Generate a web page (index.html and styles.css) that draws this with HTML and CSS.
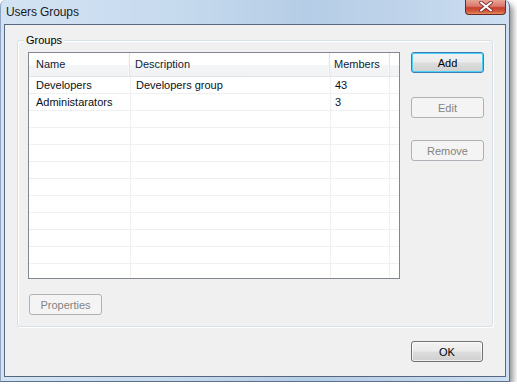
FILE: index.html
```html
<!DOCTYPE html>
<html>
<head>
<meta charset="utf-8">
<link rel="stylesheet" href="styles.css">
</head>
<body>
<div class="window">
  <div class="titlebar">
    <span class="title">Users Groups</span>
    <div class="close">
      <svg width="16" height="11" viewBox="0 0 16 11">
        <path d="M3 1.5 L13 9.5 M13 1.5 L3 9.5" stroke="#7a3030" stroke-width="3.6" stroke-linecap="round"/>
        <path d="M3 1.5 L13 9.5 M13 1.5 L3 9.5" stroke="#ffffff" stroke-width="2" stroke-linecap="round"/>
      </svg>
    </div>
  </div>
  <div class="client">
    <div class="group">
      <span class="legend">Groups</span>
      <div class="group-main">
        <div class="list">
          <div class="list-head">
            <div class="hcell c-name">Name</div>
            <div class="hcell c-desc">Description</div>
            <div class="hcell c-mem">Members</div>
            <div class="hcell c-fill"></div>
          </div>
          <div class="list-body">
            <div class="row"><div class="cell c-name">Developers</div><div class="cell c-desc">Developers group</div><div class="cell c-mem">43</div><div class="cell c-fill"></div></div>
            <div class="row"><div class="cell c-name">Administarators</div><div class="cell c-desc"></div><div class="cell c-mem">3</div><div class="cell c-fill"></div></div>
            <div class="row"><div class="cell c-name"></div><div class="cell c-desc"></div><div class="cell c-mem"></div><div class="cell c-fill"></div></div>
            <div class="row"><div class="cell c-name"></div><div class="cell c-desc"></div><div class="cell c-mem"></div><div class="cell c-fill"></div></div>
            <div class="row"><div class="cell c-name"></div><div class="cell c-desc"></div><div class="cell c-mem"></div><div class="cell c-fill"></div></div>
            <div class="row"><div class="cell c-name"></div><div class="cell c-desc"></div><div class="cell c-mem"></div><div class="cell c-fill"></div></div>
            <div class="row"><div class="cell c-name"></div><div class="cell c-desc"></div><div class="cell c-mem"></div><div class="cell c-fill"></div></div>
            <div class="row"><div class="cell c-name"></div><div class="cell c-desc"></div><div class="cell c-mem"></div><div class="cell c-fill"></div></div>
            <div class="row"><div class="cell c-name"></div><div class="cell c-desc"></div><div class="cell c-mem"></div><div class="cell c-fill"></div></div>
            <div class="row"><div class="cell c-name"></div><div class="cell c-desc"></div><div class="cell c-mem"></div><div class="cell c-fill"></div></div>
            <div class="row"><div class="cell c-name"></div><div class="cell c-desc"></div><div class="cell c-mem"></div><div class="cell c-fill"></div></div>
            <div class="row last"><div class="cell c-name"></div><div class="cell c-desc"></div><div class="cell c-mem"></div><div class="cell c-fill"></div></div>
          </div>
        </div>
        <div class="side-buttons">
          <button class="btn default btn-add">Add</button>
          <button class="btn btn-edit" disabled>Edit</button>
          <button class="btn btn-remove" disabled>Remove</button>
        </div>
      </div>
      <button class="btn btn-props" disabled>Properties</button>
    </div>
    <div class="footer">
      <button class="btn btn-ok">OK</button>
    </div>
  </div>
</div>
</body>
</html>
```

FILE: styles.css
```css
html, body {
  margin: 0;
  padding: 0;
  background: #ffffff;
}
body {
  font-family: "Liberation Sans", Arial, sans-serif;
  font-size: 11px;
  color: #000;
}
.window {
  width: 510px;
  height: 382px;
  box-sizing: border-box;
  padding: 0 3px 4px 3px;
  display: flex;
  flex-direction: column;
  background: linear-gradient(90deg, #d3e3f3 0%, #c6daee 35%, #b5cde6 60%, #c2d6ec 85%, #cddff1 100%);
  border-right: 1px solid #5b6f8a;
  border-bottom: 1px solid #5b6f8a;
  border-left: 1px solid #8ea4bf;
  border-radius: 6px 6px 0 0;
  box-shadow: 3px 4px 6px rgba(0,0,0,0.45);
  overflow: hidden;
}
.titlebar {
  height: 24px;
  display: flex;
  align-items: flex-start;
  flex-shrink: 0;
}
.title {
  font-size: 12px;
  color: #1a1a1a;
  padding: 5px 0 0 2px;
  line-height: 14px;
  letter-spacing: -0.1px;
}
.close {
  margin-left: auto;
  margin-right: 0;
  width: 41px;
  height: 15px;
  box-sizing: border-box;
  border: 1px solid #6e2b24;
  border-top: none;
  border-radius: 0 0 4px 4px;
  background: linear-gradient(180deg, #e9a595 0%, #d9776a 45%, #c8412e 55%, #d0583c 80%, #e38a5e 100%);
  display: flex;
  align-items: center;
  justify-content: center;
}
.close svg { display: block; margin-top: -1px; }
.client {
  flex: 1;
  background: #f0f0f0;
  border: 1px solid #56677e;
  padding: 15px 13px 0 12px;
  display: flex;
  flex-direction: column;
}
.group {
  position: relative;
  width: 476px;
  height: 287px;
  box-sizing: border-box;
  border: 1px solid #d5dfe5;
  border-radius: 3px;
  box-shadow: inset 1px 1px 0 #ffffff, 1px 1px 0 #ffffff;
  padding: 11px 0 0 10px;
  display: flex;
  flex-direction: column;
}
.legend {
  position: absolute;
  left: 6px;
  top: -8px;
  padding: 0 2px;
  background: #f0f0f0;
  line-height: 14px;
  font-size: 11px;
  color: #000;
}
.group-main {
  display: flex;
  align-items: flex-start;
}
.list {
  width: 372px;
  height: 227px;
  box-sizing: border-box;
  border: 1px solid #828790;
  background: #fff;
  overflow: hidden;
}
.list-head {
  display: flex;
  height: 23px;
  border-bottom: 1px solid #e5e5e5;
  background: linear-gradient(180deg, #ffffff 0%, #ffffff 50%, #f4f5f7 51%, #f1f2f4 100%);
}
.hcell {
  box-sizing: border-box;
  line-height: 22px;
  border-right: 1px solid #e3e5e8;
  box-shadow: inset -1px 0 0 #f9f9fa;
  color: #0e1c36;
  white-space: nowrap;
  overflow: hidden;
}
.c-name { width: 101px; padding-left: 7px; }
.c-desc { width: 200px; padding-left: 5px; }
.c-mem { width: 60px; padding-left: 4px; }
.c-fill { flex: 1; }
.list-head .c-fill { border-right: none; box-shadow: none; }
.row {
  display: flex;
  height: 17px;
  box-sizing: border-box;
  border-bottom: 1px solid #f0f0f0;
}
.cell {
  box-sizing: border-box;
  height: 16px;
  line-height: 17px;
  border-right: 1px solid #f0f0f0;
  color: #0a1020;
  white-space: nowrap;
  overflow: hidden;
}
.row .c-name { width: 102px; }
.row .c-desc { width: 200px; }
.row .c-mem { width: 59px; }
.row .c-fill { border-right: none; }
.side-buttons {
  display: flex;
  flex-direction: column;
  margin-left: 11px;
}
.btn {
  font-family: "Liberation Sans", Arial, sans-serif;
  font-size: 11px;
  width: 73px;
  height: 21px;
  box-sizing: border-box;
  padding: 0;
  margin: 0;
  border: 1px solid #707070;
  border-radius: 3px;
  color: #000;
  background: linear-gradient(180deg, #f2f2f2 0%, #ebebeb 48%, #dddddd 52%, #cfcfcf 100%);
  box-shadow: inset 0 0 0 1px rgba(255,255,255,0.7);
}
.btn:disabled {
  color: #838383;
  border-color: #adb2b5;
  background: #f4f4f4;
  box-shadow: none;
}
.btn.default {
  border-color: #3c7fb1;
  box-shadow: inset 0 0 0 1px #48d0f7;
}
.btn-edit { margin-top: 24px; }
.btn-remove { margin-top: 22px; }
.btn-props {
  margin-top: 15px;
  margin-left: 1px;
}
.footer {
  display: flex;
  justify-content: flex-end;
  padding: 14px 9px 0 0;
}
.btn-ok {
  width: 72px;
}
```
